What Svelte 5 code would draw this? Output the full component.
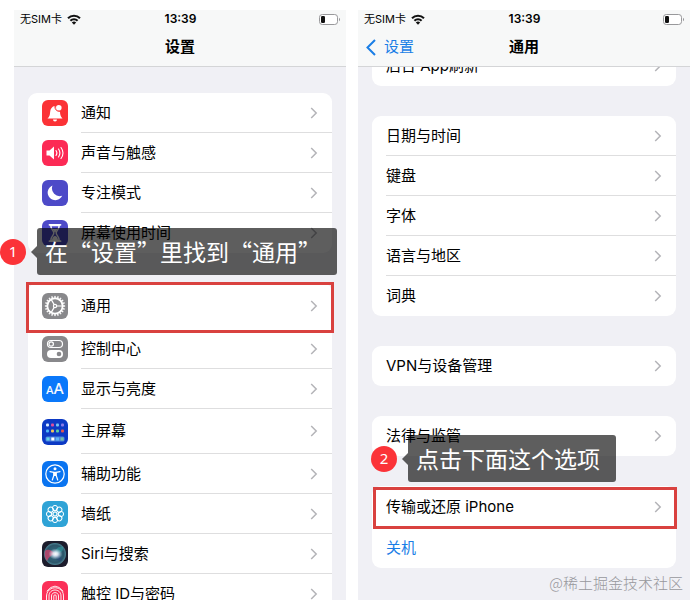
<script>
  const settingsGroups = [
    [
      { icon: 'bell', color: '#fb3236', label: '通知' },
      { icon: 'sound', color: '#fc2a55', label: '声音与触感' },
      { icon: 'moon', color: '#4d4ac8', label: '专注模式' },
      { icon: 'hourglass', color: '#4d4ac8', label: '屏幕使用时间' }
    ],
    [
      { icon: 'gear', color: '#88888b', label: '通用', size: 'big', framed: true },
      { icon: 'toggles', color: '#88888b', label: '控制中心' },
      { icon: 'text', color: '#0a78fa', label: '显示与亮度' },
      { icon: 'home', color: '#0c39c4', label: '主屏幕', size: 'mid' },
      { icon: 'access', color: '#0a74f0', label: '辅助功能' },
      { icon: 'flower', color: '#2fa3d6', label: '墙纸' },
      { icon: 'siri', color: '#1c1c2c', label: 'Siri与搜索' },
      { icon: 'finger', color: '#fb3058', label: '触控 ID与密码' }
    ]
  ];

  const generalGroups = [
    [{ label: '后台 App刷新' }],
    [
      { label: '日期与时间' },
      { label: '键盘' },
      { label: '字体' },
      { label: '语言与地区' },
      { label: '词典' }
    ],
    [{ label: 'VPN与设备管理' }],
    [{ label: '法律与监管' }],
    [
      { label: '传输或还原 iPhone', framed: true },
      { label: '关机', action: true }
    ]
  ];

  const petals = [0, 45, 90, 135, 180, 225, 270, 315];
  const teeth = Array.from({ length: 20 }, (_, i) => i * 18);
  const apps = [
    ['#d5e8ff', '#e04f9d', '#72c3ef', '#8b7be8'],
    ['#4fb7f5', '#f2c25a', '#5cd0a0', '#e2574f']
  ];
</script>

{#snippet statusBar()}
  <div class="status">
    <div class="carrier">
      <span>无</span><span>SIM</span><span>卡</span>
      <svg class="wifi" width="14" height="11" viewBox="0 0 14 11">
        <path d="M1 4.200a8.300 8.300 0 0 1 12 0M3.400 6.800a5 5 0 0 1 7.200 0" fill="none" stroke="#111" stroke-width="2" />
        <path d="M7 10.800 4.800 8.600a3.100 3.100 0 0 1 4.400 0z" fill="#111" />
      </svg>
    </div>
    <time>13:39</time>
    <svg class="battery" width="22" height="11" viewBox="0 0 22 11">
      <rect x="0.5" y="0.5" width="18" height="10" rx="2.8" fill="#fff" stroke="#98989b" />
      <rect x="2" y="2" width="4" height="7" rx="1.2" fill="#111" />
      <path d="M20 3.8c1.4.5 1.4 2.900 0 3.400z" fill="#98989b" />
    </svg>
  </div>
{/snippet}

{#snippet icon(name, color)}
  <svg class="icon" viewBox="0 0 26 26" width="26" height="26" aria-hidden="true">
    <rect width="26" height="26" rx="6" fill={color} />
    {#if name === 'bell'}
      <path d="M5.500 18.500c2-1.800 2.400-3.200 2.600-6.200.2-3.600 2-6 4.900-6.300.6 4 2.800 5.800 5 5.500.1 3.400.6 5.200 2.500 7z" fill="#fff" />
      <path d="M11 19.500h4a2 2 0 0 1-4 0z" fill="#fff" />
      <circle cx="16.800" cy="7.800" r="2.800" fill="#fff" />
      <path d="M13 5.500c-.8 3.800 1.800 6.300 5 5.800" fill="none" stroke={color} stroke-width=".8" />
    {:else if name === 'sound'}
      <path d="M4.500 10.500h3l4.500-4v13l-4.500-4h-3z" fill="#fff" />
      <path d="M14 10.500q1.800 2.500 0 5M16.500 9q2.800 4 0 8M19 7.500q4 5.500 0 11" fill="none" stroke="#fff" stroke-width="1.100" stroke-linecap="round" />
    {:else if name === 'moon'}
      <path d="M10.500 5.500a7.600 7.600 0 1 0 9.700 10.200A7.800 7.800 0 0 1 10.500 5.500z" fill="#fff" />
    {:else if name === 'hourglass'}
      <path d="M7.500 4.800h11M7.500 21.200h11" stroke="#fff" stroke-width="1.800" stroke-linecap="round" />
      <path d="M8.800 5.500c0 4.500 3 5 3 7.500s-3 3-3 7.500h8.400c0-4.500-3-5-3-7.500s3-3 3-7.500z" fill="none" stroke="#fff" stroke-width="1.400" />
      <path d="M10.300 9h5.400L13 12.800zM10 20c.3-2.800 1.500-4 3-4s2.700 1.200 3 4z" fill="#fff" />
    {:else if name === 'gear'}
      <circle cx="13" cy="13" r="7.600" fill="none" stroke="#fff" stroke-width="1.700" />
      {#each teeth as angle}
        <path d="M12.300 5.500 12.600 3h.8l.3 2.500z" fill="#fff" stroke="#fff" stroke-width=".4" transform="rotate({angle} 13 13)" />
      {/each}
      <circle cx="13" cy="13" r="1.600" fill="none" stroke="#fff" stroke-width="1.200" />
      <path d="M14.500 13H20M12.200 11.600 9.300 6.600M12.200 14.400l-2.900 5" stroke="#fff" stroke-width="1.200" />
    {:else if name === 'toggles'}
      <rect x="5.500" y="4.500" width="15" height="7" rx="3.500" fill="none" stroke="#fff" stroke-width="1.200" />
      <circle cx="9.200" cy="8" r="2.200" fill="none" stroke="#fff" stroke-width="1.200" />
      <rect x="5" y="14" width="16" height="8" rx="4" fill="#fff" />
      <circle cx="17" cy="18" r="2.300" fill={color} />
    {:else if name === 'text'}
      <text x="4" y="18" font-size="11" fill="#fff" stroke="#fff" stroke-width=".2">A</text>
      <text x="11.500" y="18" font-size="15" fill="#fff" stroke="#fff" stroke-width=".2">A</text>
    {:else if name === 'home'}
      {#each apps as line, row}
        {#each line as fill, col}
          <rect x={4 + col * 5} y={4.500 + row * 6} width="3" height="3" rx="1" {fill} />
        {/each}
      {/each}
      <rect x="3.500" y="17.500" width="19" height="5" rx="1.500" fill="#4b83dc" />
      <path d="M4.500 18.500h3v3h-3z" fill="#62d2e4" />
      <path d="M9.300 18.500h3v3h-3z" fill="#fff" />
      <path d="M14 18.500h3v3h-3z" fill="#5eb2f5" />
      <path d="M18.600 18.500h3v3h-3z" fill="#75c0a2" />
    {:else if name === 'access'}
      <circle cx="13" cy="13" r="9.200" fill="none" stroke="#fff" stroke-width="1.200" />
      <circle cx="13" cy="7.800" r="1.500" fill="#fff" />
      <path d="M8 10.600l3.800.7v3.200L10.300 19M18 10.600l-3.800.7v3.200l1.500 4.500" fill="none" stroke="#fff" stroke-width="1.200" stroke-linecap="round" stroke-linejoin="round" />
      <path d="M11.500 10.800h3V15h-3z" fill="#fff" />
    {:else if name === 'flower'}
      {#each petals as angle}
        <circle cx="13" cy="7" r="2.600" fill="none" stroke="#fff" stroke-width="1" transform="rotate({angle} 13 13)" />
      {/each}
      <circle cx="13" cy="13" r="2" fill="none" stroke="#fff" stroke-width=".9" />
      {#each petals as angle}
        <circle cx="13" cy="10" r="1.200" fill="none" stroke="#fff" stroke-width=".5" transform="rotate({angle + 22} 13 13)" />
      {/each}
    {:else if name === 'siri'}
      <defs>
        <radialGradient id="orb">
          <stop offset="0" stop-color="#3b7288" />
          <stop offset=".8" stop-color="#2c566a" />
          <stop offset="1" stop-color="#4c8494" />
        </radialGradient>
        <radialGradient id="glow">
          <stop offset="0" stop-color="#fff" />
          <stop offset=".35" stop-color="#eef4ff" stop-opacity=".85" />
          <stop offset="1" stop-color="#cfe0f5" stop-opacity="0" />
        </radialGradient>
      </defs>
      <circle cx="13" cy="13" r="11" fill="url(#orb)" />
      <path d="M3 10c2-2 6-2 10 3-4 1-6 3-8 7-2-3-3-6-2-10z" fill="#e0406c" opacity=".7" />
      <path d="M13 13c0-5 3-8 8-7 1 4-3 7-8 7z" fill="#2fa9a9" opacity=".5" />
      <path d="M13 13c3 0 6 2 7 6-3 2-7 0-7-6z" fill="#23427c" opacity=".5" />
      <ellipse cx="13.500" cy="13" rx="7" ry="5.500" fill="url(#glow)" />
    {:else}
      <path d="M5 10q8-10 16 0M4.500 15c0-11 17-11 17 0v6M7 22v-7c0-8 12-8 12 0v7M9.500 22v-7c0-4.500 7-4.500 7 0v7M11.800 22v-7c0-1.600 2.400-1.600 2.400 0v7M4.500 15v4" fill="none" stroke="#fff" stroke-width=".9" stroke-linecap="round" />
    {/if}
  </svg>
{/snippet}

{#snippet group(rows)}
  <ul class="card">
    {#each rows as row}
      <li>
        <button class="row {row.size ?? ''}" class:action={row.action} class:framed={row.framed}>
          {#if row.icon}
            {@render icon(row.icon, row.color)}
          {/if}
          <span class="line">
            <span>{row.label}</span>
            {#if !row.action}
              <svg width="8" height="12" viewBox="0 0 8 12" aria-hidden="true">
                <path d="M1.200 1l5 5-5 5" fill="none" stroke="#b4b4b8" stroke-width="1.500" />
              </svg>
            {/if}
          </span>
        </button>
      </li>
    {/each}
  </ul>
{/snippet}

{#snippet note(number, text)}
  <span class="badge">{number}</span>
  <span class="bubble">{text}</span>
{/snippet}

<main>
  <section class="phone">
    <header>
      {@render statusBar()}
      <div class="nav"><h1>设置</h1></div>
    </header>
    <div class="body">
      {#each settingsGroups as rows}
        {@render group(rows)}
      {/each}
    </div>
    <div class="note first">{@render note(1, '在“设置”里找到“通用”')}</div>
  </section>

  <section class="phone">
    <header>
      {@render statusBar()}
      <div class="nav">
        <button class="back">
          <svg width="10" height="17" viewBox="0 0 10 17" aria-hidden="true">
            <path d="M9 1 1.500 8.500 9 16" fill="none" stroke="#1a7ee6" stroke-width="2" />
          </svg>
          设置
        </button>
        <h1>通用</h1>
      </div>
    </header>
    <div class="body scrolled">
      {#each generalGroups as rows}
        {@render group(rows)}
      {/each}
    </div>
    <div class="note second">{@render note(2, '点击下面这个选项')}</div>
    <span class="watermark">@稀土掘金技术社区</span>
  </section>
</main>

<style>
  :global(body) {
    margin: 0;
    background: #fff;
  }

  main {
    display: flex;
    gap: 12px;
    box-sizing: border-box;
    height: 100vh;
    padding: 10px 10px 8px 14px;
    font-family: Inter, 'Noto Sans CJK SC', sans-serif;
    font-size: 15px;
    color: #000;
  }

  .phone {
    position: relative;
    display: flex;
    flex: 1;
    flex-direction: column;
    min-width: 0;
    background: #f0f0f5;
  }

  header {
    flex: none;
    background: #f7f8f8;
    border-bottom: 1px solid #d4d5d7;
  }

  .status {
    display: grid;
    grid-template-columns: 1fr auto 1fr;
    align-items: center;
    height: 18px;
    padding: 0 5px 0 6px;
    font-size: 11px;
    line-height: 18px;
  }

  .carrier {
    display: flex;
    align-items: center;
  }

  .wifi {
    margin-left: 5px;
  }

  time {
    font-size: 12px;
    font-weight: 600;
  }

  .battery {
    justify-self: end;
  }

  .nav {
    display: grid;
    grid-template-columns: 1fr auto 1fr;
    align-items: center;
    height: 38px;
    padding: 0 8px;
  }

  h1 {
    grid-column: 2;
    margin: 0;
    font-size: 15px;
    font-weight: 700;
    line-height: 20px;
  }

  button {
    margin: 0;
    padding: 0;
    border: none;
    background: none;
    color: inherit;
    font: inherit;
    text-align: left;
    cursor: pointer;
  }

  .back {
    display: flex;
    align-items: center;
    gap: 8px;
    color: #1a7ee6;
    line-height: 20px;
  }

  .body {
    flex: 1;
    min-height: 0;
    padding: 26px 14px 0;
    overflow: hidden;
  }

  .body.scrolled {
    padding-top: 0;
  }

  .scrolled .card:first-child {
    margin-top: -21px;
  }

  .card {
    margin: 0 0 30px;
    padding: 0;
    list-style: none;
    background: #fff;
    border-radius: 9px;
  }

  .row {
    position: relative;
    display: flex;
    align-items: center;
    gap: 13px;
    width: 100%;
    height: 40px;
    padding-left: 14px;
  }

  .row.framed {
    height: 42px;
  }

  .row.mid {
    height: 45px;
  }

  .row.big {
    height: 46px;
  }

  .row.action {
    color: #1a7ee6;
  }

  .icon {
    flex: none;
  }

  .line {
    display: flex;
    flex: 1;
    align-items: center;
    justify-content: space-between;
    box-sizing: border-box;
    height: 100%;
    padding-right: 14px;
    border-bottom: 1px solid #dededf;
    line-height: 20px;
  }

  li:last-child .line,
  .framed .line {
    border-bottom-color: transparent;
  }

  .framed::after {
    content: '';
    position: absolute;
    z-index: 1;
    inset: 1px -1px -1px 1px;
    border: 3px solid #d9413f;
  }

  .framed.big::after {
    inset: -1px -2px -4px;
  }

  .note {
    position: absolute;
    z-index: 2;
    display: flex;
    align-items: center;
    gap: 11px;
    color: #fff;
    font-family: 'Noto Sans CJK SC', sans-serif;
    white-space: nowrap;
  }

  .note.first {
    top: 218px;
    left: -14px;
  }

  .note.second {
    top: 425px;
    left: 13px;
  }

  .badge {
    width: 26px;
    height: 26px;
    border-radius: 50%;
    background: #fb3338;
    font-family: 'Noto Sans', sans-serif;
    font-size: 15px;
    line-height: 25px;
    text-align: center;
  }

  .bubble {
    position: relative;
    padding: 0 16px 0 8px;
    border-radius: 3px;
    background: rgba(0, 0, 0, 0.63);
    font-size: 23px;
    line-height: 47px;
  }

  .bubble::before {
    content: '';
    position: absolute;
    top: 18px;
    right: 100%;
    border: 6px solid transparent;
    border-right-color: rgba(0, 0, 0, 0.63);
    border-left: none;
  }

  .watermark {
    position: absolute;
    right: 7px;
    bottom: 7px;
    color: #98989d;
    font-family: 'Noto Sans CJK SC', sans-serif;
    font-size: 15px;
    font-weight: 300;
    line-height: 20px;
  }
</style>
